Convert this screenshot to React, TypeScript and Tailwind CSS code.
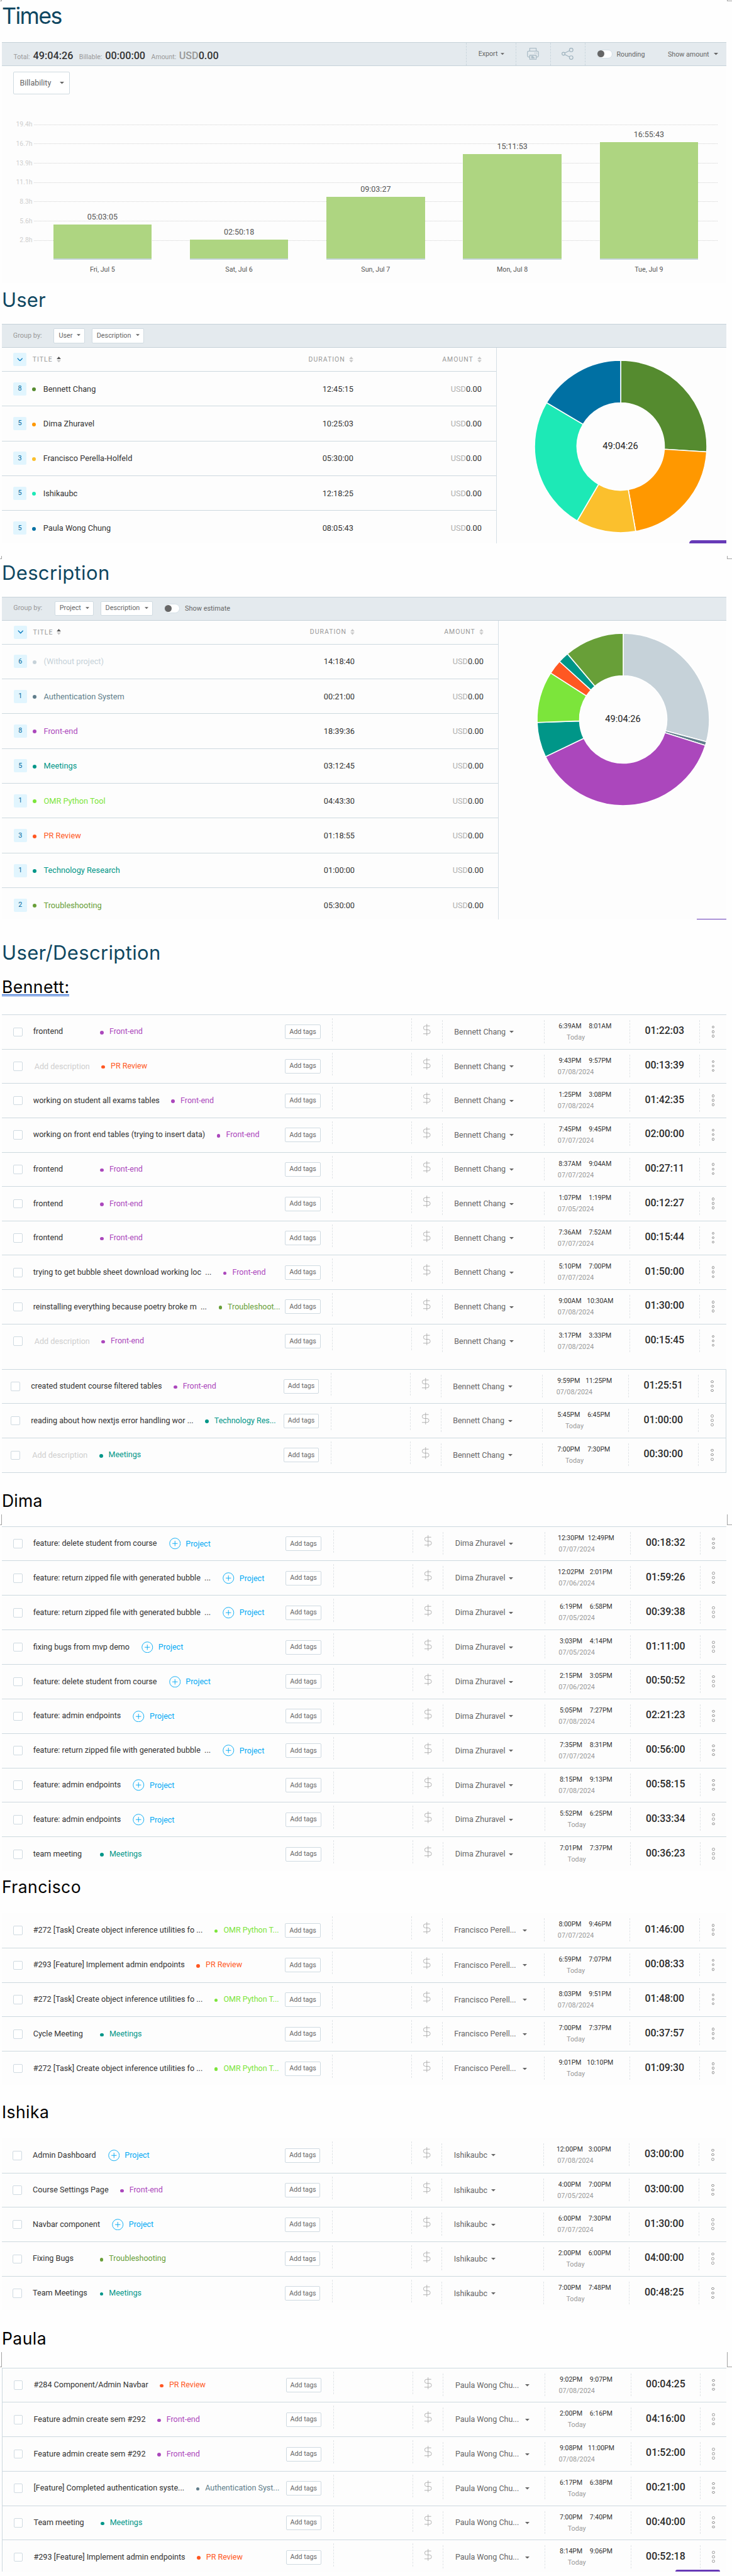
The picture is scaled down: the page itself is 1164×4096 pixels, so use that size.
import React from "react";
import { DollarSign } from "lucide-react";

/* ---------- shared pieces ---------- */

const Caret = ({ className = "" }: { className?: string }) => (
  <svg viewBox="0 0 8 4" className={`h-[3.6px] w-[7px] shrink-0 fill-[#666] ${className}`}>
    <path d="M0 0h8L4 4z" />
  </svg>
);

const Toggle = () => (
  <span className="flex h-[14.4px] w-[25px] shrink-0 items-center rounded-full border border-[#d3dee5] bg-white">
    <span className="h-[11.4px] w-[11.4px] rounded-full bg-[#666]" />
  </span>
);

const PageCorner = ({ className }: { className: string }) => (
  <>
    <span className={`absolute left-0 w-[3px] border-r border-b border-[#a3a3a3] ${className}`} />
    <span className={`absolute right-0 w-[8px] border-b border-l border-[#a3a3a3] ${className}`} />
  </>
);

const Heading = ({ children, className }: { children: React.ReactNode; className: string }) => (
  <div className={`flex items-end font-['Inter',sans-serif] leading-none whitespace-nowrap ${className}`}>{children}</div>
);

const Select = ({ label, className }: { label: string; className: string }) => (
  <span className={`flex h-[23.5px] items-center justify-between rounded-[2px] border border-[#d0dbe2] bg-white pr-[6px] pl-[7px] text-[10.8px] text-[#666] ${className}`}>
    {label}
    <Caret className="mb-[2px] !w-[6px]" />
  </span>
);

/* ---------- summary bar ---------- */

const PrinterIcon = () => (
  <svg viewBox="0 0 24 24" className="h-[19px] w-[19px] fill-none stroke-[#9fb3be] stroke-[1.3]">
    <path d="M5.5 6.5V1h13v5.5M5.5 18.5H3.5A2.5 2.5 0 0 1 1 16V9a2.5 2.5 0 0 1 2.5-2.5h17A2.5 2.5 0 0 1 23 9v7a2.5 2.5 0 0 1-2.5 2.5h-2" />
    <path d="M5.500 15h13v8h-13zM8.500 17.500h4M8.500 19h6M8.500 20.500h7M15 10.500h2M18.500 10.500h2" />
  </svg>
);

const ShareIcon = () => (
  <svg viewBox="0 0 24 24" className="h-[19px] w-[19px] fill-none stroke-[#9fb3be] stroke-[1.5]">
    <circle cx="3.800" cy="12" r="3" />
    <circle cx="19.300" cy="4.300" r="3.600" />
    <circle cx="19.300" cy="19.700" r="3.600" />
    <path d="M6.500 10.500l9.500-4.700M6.500 13.500l9.500 4.700" />
  </svg>
);

const SummaryBar = () => (
  <div className="flex h-[38.500px] justify-between border-y border-[#c6d2d9] bg-[#e4eaee]">
    <div className="flex items-baseline pt-[9px] pl-[18.600px] text-[10.500px] text-[#999]">
      Total:
      <b className="ml-[5px] text-[16.200px] font-medium text-[#333]">49:04:26</b>
      <span className="ml-[9.500px]">Billable:</span>
      <b className="ml-[5px] text-[16.200px] font-medium text-[#333]">00:00:00</b>
      <span className="ml-[9.500px]">Amount:</span>
      <b className="ml-[4.500px] text-[16.200px] font-medium text-[#999]">USD</b>
      <b className="text-[16.200px] font-medium text-[#333]">0.00</b>
    </div>
    <div className="flex text-[10.700px] text-[#666]">
      <div className="flex w-[79px] items-center border-l border-dashed border-[#cbd7de] pl-[18.500px]">
        Export <Caret className="ml-[5px] !w-[6px]" />
      </div>
      <div className="flex w-[54.700px] items-center justify-center border-l border-dashed border-[#cbd7de]"><PrinterIcon /></div>
      <div className="flex w-[54.700px] items-center justify-center border-l border-dashed border-[#cbd7de]"><ShareIcon /></div>
      <div className="flex w-[225.500px] items-center border-l border-dashed border-[#cbd7de] pl-[18px]">
        <Toggle />
        <span className="mt-[2px] ml-[7px]">Rounding</span>
        <span className="mt-[2px] ml-[36.500px]">Show amount</span>
        <Caret className="ml-[7px]" />
      </div>
    </div>
  </div>
);

/* ---------- bar chart ---------- */

const ticks = ["19.4h", "16.7h", "13.9h", "11.1h", "8.3h", "5.6h", "2.8h"];
const bars = [
  { day: "Fri, Jul 5", total: "05:03:05", height: 55.7 },
  { day: "Sat, Jul 6", total: "02:50:18", height: 31.6 },
  { day: "Sun, Jul 7", total: "09:03:27", height: 100 },
  { day: "Mon, Jul 8", total: "15:11:53", height: 168 },
  { day: "Tue, Jul 9", total: "16:55:43", height: 186.8 },
];

const Chart = () => (
  <div className="h-[344.500px] bg-[#fdfdfd] pt-[9px]">
    <div className="ml-[18px] flex h-[36px] w-[90px] items-center justify-between rounded-[2px] border border-[#cfdae1] bg-white pr-[8.500px] pl-[9.500px] text-[12.500px] text-[#666]">
      Billability <Caret />
    </div>
    <div className="relative mt-[32.700px] flex h-[230.200px] flex-col">
      {ticks.map((t) => (
        <div key={t} className="flex h-[30.700px] items-center">
          <span className="w-[48.500px] text-right text-[10.400px] text-[#cfcfcf]">{t}</span>
          <span className="ml-[2.500px] w-[1086.500px] border-t border-dotted border-[#d2d2d2]" />
        </div>
      ))}
      <div className="absolute bottom-0 left-[81.600px] flex items-end gap-[60.750px]">
        {bars.map((b) => (
          <div key={b.day} className="relative w-[156.500px]">
            <div className="mb-[5px] text-center text-[12.500px] leading-[14px] text-[#555]">{b.total}</div>
            <div className="border-b-2 border-[#c5d3db] bg-[#aed581]" style={{ height: b.height }} />
            <div className="absolute top-full w-full pt-[9.500px] text-center text-[10.700px] leading-[14px] text-[#555]">{b.day}</div>
          </div>
        ))}
      </div>
    </div>
  </div>
);

/* ---------- grouped tables with donut ---------- */

type Slice = { count: number; name: string; time: string; color: string; text?: string };

const users: Slice[] = [
  { count: 8, name: "Bennett Chang", time: "12:45:15", color: "#558b2f" },
  { count: 5, name: "Dima Zhuravel", time: "10:25:03", color: "#ff9800" },
  { count: 3, name: "Francisco Perella-Holfeld", time: "05:30:00", color: "#fbc02d" },
  { count: 5, name: "Ishikaubc", time: "12:18:25", color: "#1de9b6" },
  { count: 5, name: "Paula Wong Chung", time: "08:05:43", color: "#0070a3" },
];

const projects: Slice[] = [
  { count: 6, name: "(Without project)", time: "14:18:40", color: "#c6d2d9", text: "#c6d2d9" },
  { count: 1, name: "Authentication System", time: "00:21:00", color: "#607d8b", text: "#607d8b" },
  { count: 8, name: "Front-end", time: "18:39:36", color: "#ab47bc", text: "#ab47bc" },
  { count: 5, name: "Meetings", time: "03:12:45", color: "#009688", text: "#009688" },
  { count: 1, name: "OMR Python Tool", time: "04:43:30", color: "#7ce53b", text: "#7ce53b" },
  { count: 3, name: "PR Review", time: "01:18:55", color: "#ff5722", text: "#ff5722" },
  { count: 1, name: "Technology Research", time: "01:00:00", color: "#009688", text: "#009688" },
  { count: 2, name: "Troubleshooting", time: "05:30:00", color: "#689f38", text: "#689f38" },
];

const seconds = (t: string) => t.split(":").reduce((a, v) => a * 60 + Number(v), 0);

const Donut = ({ data, className }: { data: Slice[]; className: string }) => {
  const sum = data.reduce((a, d) => a + seconds(d.time), 0);
  let at = 0;
  const R = 137;
  const r = 69.5;
  const pt = (rad: number, f: number) => `${140 + rad * Math.sin(2 * Math.PI * f)} ${140 - rad * Math.cos(2 * Math.PI * f)}`;
  return (
    <div className={`relative h-[280px] w-[280px] ${className}`}>
      <svg viewBox="0 0 280 280" className="h-full w-full">
        {data.map((d) => {
          const from = at;
          at += seconds(d.time) / sum;
          const big = at - from > 0.5 ? 1 : 0;
          return (
            <path
              key={d.name}
              fill={d.color}
              className="stroke-white stroke-[1.600]"
              d={`M${pt(R, from)}A${R} ${R} 0 ${big} 1 ${pt(R, at)}L${pt(r, at)}A${r} ${r} 0 ${big} 0 ${pt(r, from)}Z`}
            />
          );
        })}
      </svg>
      <span className="absolute inset-0 flex items-center justify-center text-[14.600px] text-[#1c1c1c]">49:04:26</span>
    </div>
  );
};

const Sort = ({ active = false }: { active?: boolean }) => (
  <svg viewBox="0 0 7 10" className="h-[9.500px] w-[7px] fill-[#c8c8c8]">
    <path className={active ? "fill-[#555]" : ""} d="M0 4.300h7L3.500 0z" />
    <path d="M0 5.700h7L3.500 10z" />
  </svg>
);

const GroupTable = ({ rows, wide, className }: { rows: Slice[]; wide?: boolean; className: string }) => {
  const lead = wide ? "w-[356.500px] pl-[18.500px]" : "w-[355px] pl-[17.800px]";
  const dur = wide ? "w-[204.500px]" : "w-[203.800px]";
  const amt = wide ? "w-[204.800px]" : "w-[204px]";
  return (
    <div className={`overflow-hidden border-r border-[#d5dfe5] ${className}`}>
      <div className="flex h-[37px] items-center text-[10.500px] tracking-[1px] text-[#999]">
        <div className={`flex items-center ${lead}`}>
          <span className="flex h-[21px] w-[21.500px] items-center justify-center rounded-[2px] bg-[#e1f5fe]">
            <svg viewBox="0 0 10 6" className="h-[5.500px] w-[9.500px] fill-none stroke-[#0277bd] stroke-[1.400]">
              <path d="M.7.7L5 5.200 9.300.7" />
            </svg>
          </span>
          <span className="mt-[1px] mr-[6px] ml-[9.500px]">TITLE</span>
          <Sort active />
        </div>
        <div className={`flex items-center justify-end gap-[6px] ${dur}`}><span>DURATION</span><Sort /></div>
        <div className={`flex items-center justify-end gap-[6px] ${amt}`}><span>AMOUNT</span><Sort /></div>
      </div>
      {rows.map((r) => (
        <div key={r.name} className={`flex items-center border-t border-[#cdd9df] text-[12.750px] text-[#333] ${wide ? "h-[55.400px]" : "h-[55.350px]"}`}>
          <div className={`flex items-center ${lead}`}>
            <span className="flex h-[21px] w-[21.500px] items-center justify-center rounded-[2px] bg-[#e1f5fe] text-[10.700px] text-[#01669a]">{r.count}</span>
            <span className="mt-[2px] ml-[9px] h-[6px] w-[6px] rounded-full" style={{ background: r.color }} />
            <span className="ml-[11.500px]" style={{ color: r.text }}>{r.name}</span>
          </div>
          <div className={`text-right ${dur}`}>{r.time}</div>
          <div className={`text-right ${amt}`}><span className="text-[#b0b0b0]">USD</span>0.00</div>
        </div>
      ))}
    </div>
  );
};

/* ---------- time entries ---------- */

type Entry = [string, string, string, string, string, string];

const tagColors: Record<string, string> = {
  "Front-end": "#ab47bc",
  "PR Review": "#ff5722",
  Meetings: "#009688",
  "Troubleshoot...": "#689f38",
  Troubleshooting: "#689f38",
  "Technology Res...": "#009688",
  "OMR Python T...": "#7ce53b",
  "Authentication Syst...": "#607d8b",
};

const bennett: Entry[] = [
  ["frontend", "Front-end", "6:39AM", "8:01AM", "Today", "01:22:03"],
  ["", "PR Review", "9:43PM", "9:57PM", "07/08/2024", "00:13:39"],
  ["working on student all exams tables", "Front-end", "1:25PM", "3:08PM", "07/08/2024", "01:42:35"],
  ["working on front end tables (trying to insert data)", "Front-end", "7:45PM", "9:45PM", "07/07/2024", "02:00:00"],
  ["frontend", "Front-end", "8:37AM", "9:04AM", "07/07/2024", "00:27:11"],
  ["frontend", "Front-end", "1:07PM", "1:19PM", "07/05/2024", "00:12:27"],
  ["frontend", "Front-end", "7:36AM", "7:52AM", "07/07/2024", "00:15:44"],
  ["trying to get bubble sheet download working loc  ...", "Front-end", "5:10PM", "7:00PM", "07/07/2024", "01:50:00"],
  ["reinstalling everything because poetry broke m  ...", "Troubleshoot...", "9:00AM", "10:30AM", "07/08/2024", "01:30:00"],
  ["", "Front-end", "3:17PM", "3:33PM", "07/08/2024", "00:15:45"],
];
const bennettMore: Entry[] = [
  ["created student course filtered tables", "Front-end", "9:59PM", "11:25PM", "07/08/2024", "01:25:51"],
  ["reading about how nextjs error handling wor ...", "Technology Res...", "5:45PM", "6:45PM", "Today", "01:00:00"],
  ["", "Meetings", "7:00PM", "7:30PM", "Today", "00:30:00"],
];
const dima: Entry[] = [
  ["feature: delete student from course", "Project", "12:30PM", "12:49PM", "07/07/2024", "00:18:32"],
  ["feature: return zipped file with generated bubble  ...", "Project", "12:02PM", "2:01PM", "07/06/2024", "01:59:26"],
  ["feature: return zipped file with generated bubble  ...", "Project", "6:19PM", "6:58PM", "07/05/2024", "00:39:38"],
  ["fixing bugs from mvp demo", "Project", "3:03PM", "4:14PM", "07/05/2024", "01:11:00"],
  ["feature: delete student from course", "Project", "2:15PM", "3:05PM", "07/06/2024", "00:50:52"],
  ["feature: admin endpoints", "Project", "5:05PM", "7:27PM", "07/08/2024", "02:21:23"],
  ["feature: return zipped file with generated bubble  ...", "Project", "7:35PM", "8:31PM", "07/07/2024", "00:56:00"],
  ["feature: admin endpoints", "Project", "8:15PM", "9:13PM", "07/08/2024", "00:58:15"],
  ["feature: admin endpoints", "Project", "5:52PM", "6:25PM", "Today", "00:33:34"],
  ["team meeting", "Meetings", "7:01PM", "7:37PM", "Today", "00:36:23"],
];
const francisco: Entry[] = [
  ["#272 [Task] Create object inference utilities fo ...", "OMR Python T...", "8:00PM", "9:46PM", "07/07/2024", "01:46:00"],
  ["#293 [Feature] Implement admin endpoints", "PR Review", "6:59PM", "7:07PM", "Today", "00:08:33"],
  ["#272 [Task] Create object inference utilities fo ...", "OMR Python T...", "8:03PM", "9:51PM", "07/08/2024", "01:48:00"],
  ["Cycle Meeting", "Meetings", "7:00PM", "7:37PM", "Today", "00:37:57"],
  ["#272 [Task] Create object inference utilities fo ...", "OMR Python T...", "9:01PM", "10:10PM", "Today", "01:09:30"],
];
const ishika: Entry[] = [
  ["Admin Dashboard", "Project", "12:00PM", "3:00PM", "07/08/2024", "03:00:00"],
  ["Course Settings Page", "Front-end", "4:00PM", "7:00PM", "07/05/2024", "03:00:00"],
  ["Navbar component", "Project", "6:00PM", "7:30PM", "07/07/2024", "01:30:00"],
  ["Fixing Bugs", "Troubleshooting", "2:00PM", "6:00PM", "Today", "04:00:00"],
  ["Team Meetings", "Meetings", "7:00PM", "7:48PM", "Today", "00:48:25"],
];
const paula: Entry[] = [
  ["#284 Component/Admin Navbar", "PR Review", "9:02PM", "9:07PM", "07/08/2024", "00:04:25"],
  ["Feature admin create sem #292", "Front-end", "2:00PM", "6:16PM", "Today", "04:16:00"],
  ["Feature admin create sem #292", "Front-end", "9:08PM", "11:00PM", "07/08/2024", "01:52:00"],
  ["[Feature] Completed authentication syste...", "Authentication Syst...", "6:17PM", "6:38PM", "Today", "00:21:00"],
  ["Team meeting", "Meetings", "7:00PM", "7:40PM", "Today", "00:40:00"],
  ["#293 [Feature] Implement admin endpoints", "PR Review", "8:14PM", "9:06PM", "Today", "00:52:18"],
];

const sep = "h-[36.500px] shrink-0 border-l border-dashed border-[#dfe3e6]";

const Entries = ({
  rows,
  user,
  rowClass = "h-[54.650px]",
  lead = "w-[450.400px] pl-[17.800px]",
  tail = "ml-[18.600px]",
  first = "border-t",
  className = "",
}: {
  rows: Entry[];
  user: string;
  rowClass?: string;
  lead?: string;
  tail?: string;
  first?: string;
  className?: string;
}) => (
  <div className={`bg-[#fdfdfd] ${className}`}>
    {rows.map(([desc, project, start, end, date, total], i) => (
      <div key={i} className={`flex overflow-hidden border-[#cdd9df] whitespace-nowrap ${rowClass} ${i === 0 ? first : "border-t"}`}>
        <div className={`flex shrink-0 items-center text-[12.500px] ${lead}`}>
          <span className="h-[14.500px] w-[14.800px] shrink-0 rounded-[2px] border border-[#cfdae1] bg-white" />
          <span className={`ml-[17.100px] min-w-[88px] shrink-0 text-[12.600px] whitespace-pre ${project === "Project" ? "!min-w-0" : ""} ${desc ? "text-[#333]" : "pt-[1px] pl-[2px] text-[#cfcfcf]"}`}>
            {desc || "Add description"}
          </span>
          {project === "Project" ? (
            <span className="ml-[19px] flex items-center gap-[8.300px] text-[#03a9f4]">
              <svg viewBox="0 0 20 20" className="h-[18.500px] w-[18.500px] fill-none stroke-[#03a9f4] stroke-1">
                <circle cx="10" cy="10" r="9.200" />
                <path d="M10 5.500v9M5.500 10h9" />
              </svg>
              <span className="pt-[1px]">Project</span>
            </span>
          ) : (
            <span className="ml-[18.600px] flex items-center gap-[9px]" style={{ color: tagColors[project] }}>
              <i className="mt-[2px] h-[5.600px] w-[5.600px] rounded-full bg-current" />
              {project}
            </span>
          )}
        </div>
        <div className="flex shrink-0 items-center">
          <span className="flex h-[23px] w-[56.400px] items-center justify-center rounded-[2px] border border-[#cfdae1] bg-white text-[10.700px] text-[#666]">Add tags</span>
        </div>
        <div className={`mt-[5px] w-[126.100px] ${sep} ${tail}`} />
        <div className={`mt-[5px] flex w-[48.300px] items-center justify-center ${sep}`}>
          <DollarSign className="h-[23px] w-[21.500px] text-[#aaa]" strokeWidth={1} />
        </div>
        <div className={`mt-[8px] flex w-[161.800px] items-center pt-[2px] pl-[18.500px] text-[12.500px] text-[#666] ${sep}`}>
          {user}
          <Caret className={user.endsWith("...") ? "ml-[10px]" : "ml-[6px]"} />
        </div>
        <div className={`mt-[8px] w-[136.400px] pl-[17px] text-[10.500px] ${sep}`}>
          <div className="flex pt-[3px] leading-[13px] text-[#333]">
            <span className="flex w-[47.800px] justify-center">{start}</span>
            <span className="flex w-[47.800px] justify-center">{end}</span>
          </div>
          <div className="flex w-[66px] justify-center pt-[5px] text-[10.800px] leading-[13px] text-[#999]">{date}</div>
        </div>
        <div className={`mt-[8px] flex w-[110.700px] items-center justify-center text-[15.900px] font-medium text-[#2b2b2b] ${sep}`}>
          <span className="mb-[2px]">{total}</span>
        </div>
        <div className={`mt-[8px] flex flex-1 flex-col items-center justify-center gap-[2.600px] ${sep}`}>
          <i className="h-[4.500px] w-[4.500px] rounded-full border border-[#999]" />
          <i className="h-[4.500px] w-[4.500px] rounded-full border border-[#999]" />
          <i className="h-[4.500px] w-[4.500px] rounded-full border border-[#999]" />
        </div>
      </div>
    ))}
  </div>
);

/* ---------- page ---------- */

export default function App() {
  return (
    <div className="relative h-[4096px] w-[1164px] overflow-hidden bg-[#fefefe] pr-[9px] pl-[3px] font-['Roboto',sans-serif]">
      <PageCorner className="top-0 h-[2px]" />
      <PageCorner className="top-[884px] h-[5px]" />
      <PageCorner className="top-[2408px] h-[17px]" />
      <PageCorner className="top-[3740px] h-[24px]" />

      <Heading className="h-[66.500px] pb-[22.700px] text-[35.800px] tracking-[-1.600px] text-[#0f4761]">Times</Heading>
      <SummaryBar />
      <Chart />

      <Heading className="h-[65.500px] pb-[23.300px] text-[31px] tracking-[0.200px] text-[#0f4761]">User</Heading>
      <div className="flex h-[38px] items-center border-y border-[#c6d2d9] bg-[#e4eaee] pl-[17.800px] text-[10.900px] text-[#999]">
        <span className="w-[64.600px]">Group by:</span>
        <Select label="User" className="w-[50px]" />
        <Select label="Description" className="ml-[10.400px] w-[83px]" />
      </div>
      <div className="relative flex h-[310.500px] overflow-hidden bg-[#fdfdfd]">
        <GroupTable rows={users} className="w-[786.500px]" />
        <Donut data={users} className="mt-[16.500px] ml-[57px]" />
        <span className="absolute right-0 bottom-0 h-[5px] w-[59px] rounded-tl-[10px] bg-[#673ab7]" />
      </div>

      <Heading className="h-[85px] pb-[22.500px] text-[31px] tracking-[0.350px] text-[#0f4761]">Description</Heading>
      <div className="flex h-[38px] items-center border-y border-[#c6d2d9] bg-[#e4eaee] pl-[18.300px] text-[10.900px] text-[#999]">
        <span className="w-[65.500px]">Group by:</span>
        <Select label="Project" className="w-[62.500px]" />
        <Select label="Description" className="mr-[18.500px] ml-[10.300px] w-[83px]" />
        <Toggle />
        <span className="mt-[2px] ml-[8px] text-[#666]">Show estimate</span>
      </div>
      <div className="relative flex h-[475px] overflow-hidden bg-[#fdfdfd]">
        <GroupTable rows={projects} wide className="w-[789.500px]" />
        <Donut data={projects} className="mt-[17.500px] ml-[58px]" />
        <span className="absolute right-0 bottom-0 h-px w-[47px] bg-[#673ab7]" />
      </div>

      <Heading className="h-[68px] text-[31px] tracking-[0.350px] text-[#0f4761]">User/Description</Heading>

      <Heading className="h-[83.500px] pb-[29px] text-[26.500px] tracking-[0.450px] text-black">
        <span className="border-b-[3px] border-double border-[#1f5fd0] leading-[23.500px]">Bennett:</span>
      </Heading>
      <Entries rows={bennett} user="Bennett Chang" className="h-[563.700px] pb-[17px]" />
      <Entries
        rows={bennettMore}
        user="Bennett Chang"
        className="border-r border-b border-[#cdd9df]"
        lead="w-[447.800px] pl-[14.300px]"
        tail="ml-[19.100px]"
      />

      <Heading className="h-[85px] pb-[27.300px] text-[26.500px] tracking-[0.250px] text-black">Dima</Heading>
      <Entries rows={dima} user="Dima Zhuravel" rowClass="h-[54.870px]" lead="w-[451.300px] pl-[17.800px]" tail="ml-[19.200px]" />

      <Heading className="h-[67px] pb-[29px] text-[26.500px] tracking-[0.450px] text-black">Francisco</Heading>
      <Entries rows={francisco} user="Francisco Perell..." first="" rowClass="h-[54.750px]" />

      <Heading className="h-[84px] pb-[28.600px] text-[26.500px] tracking-[0.450px] text-black">Ishika</Heading>
      <Entries rows={ishika} user="Ishikaubc" first="" rowClass="h-[54.700px]" lead="w-[450px] pl-[17.200px]" tail="ml-[18.400px]" />

      <Heading className="h-[91.400px] pb-[33.600px] text-[26.500px] tracking-[0.450px] text-black">Paula</Heading>
      <div className="relative h-[324px] overflow-hidden">
        <Entries
          rows={paula}
          user="Paula Wong Chu..."
          rowClass="h-[54.700px]"
          lead="w-[450.600px] pl-[17.600px]"
          tail="ml-[19px]"
          className="border-l border-[#cdd9df]"
        />
        <span className="absolute right-[10px] bottom-0 h-[2.500px] w-[71px] rounded-t-[3px] bg-[#673ab7]" />
      </div>
    </div>
  );
}
